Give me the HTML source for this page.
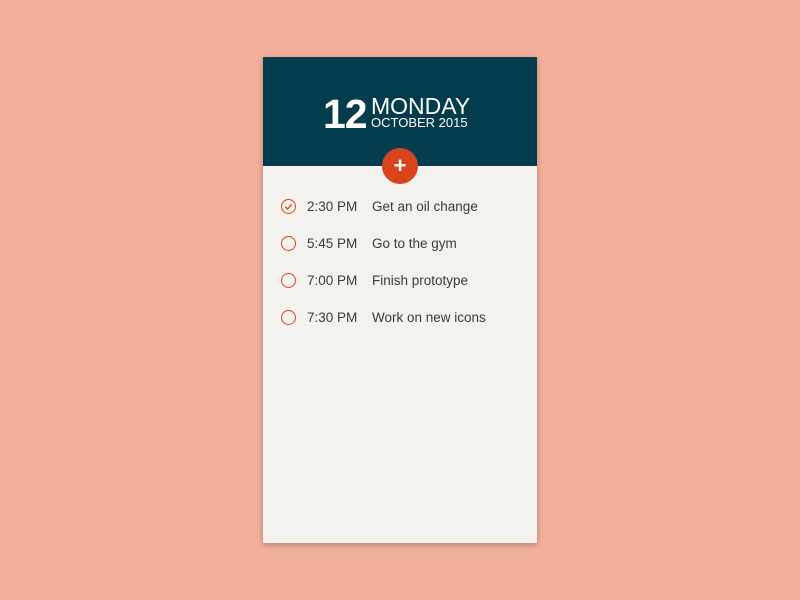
<!DOCTYPE html>
<html><head><style>
body{margin:0;width:800px;height:600px;background:#f2b09b;font-family:"Liberation Sans",sans-serif;position:relative;overflow:hidden}
.card{position:absolute;left:263px;top:57px;width:274px;height:486px;background:#f4f2ef;box-shadow:0 2px 6px rgba(0,0,0,.25)}
.head{position:absolute;left:0;top:0;width:274px;height:109px;background:#033c4c}
.t{position:absolute;color:#fff;white-space:nowrap;line-height:1}
.plus{position:absolute;left:119px;top:91px;width:36px;height:36px;border-radius:50%;background:#d9441f;color:#fff;font-size:22px;font-weight:bold;text-align:center;line-height:35px}
.row{position:absolute;left:0;height:20px;font-size:13.5px;color:#3a3a3a}
.c{position:absolute;left:18px;top:2px;width:13px;height:13px;border:1.2px solid #d9441f;border-radius:50%}
.tm{position:absolute;left:44px;top:2px;white-space:nowrap}
.tx{position:absolute;left:109px;top:2px;white-space:nowrap}
</style></head><body>
<div class="card">
<div class="head">
<div class="t" style="left:60px;top:37px;font-size:41px;font-weight:bold;letter-spacing:-1px">12</div>
<div class="t" style="left:108px;top:38px;font-size:23px;">MONDAY</div>
<div class="t" style="left:108px;top:59px;font-size:13px;">OCTOBER 2015</div>
</div>
<div class="plus">+</div>
<div class="row" style="top:140px"><div class="c"><svg width="13" height="13" style="position:absolute;left:0;top:0"><path d="M3.3 6.7 L5.6 9 L9.8 4.2" fill="none" stroke="#d9441f" stroke-width="1.3"/></svg></div><span class="tm">2:30 PM</span><span class="tx">Get an oil change</span></div>
<div class="row" style="top:177px"><div class="c"></div><span class="tm">5:45 PM</span><span class="tx">Go to the gym</span></div>
<div class="row" style="top:214px"><div class="c"></div><span class="tm">7:00 PM</span><span class="tx">Finish prototype</span></div>
<div class="row" style="top:251px"><div class="c"></div><span class="tm">7:30 PM</span><span class="tx">Work on new icons</span></div>
</div>
</body></html>
